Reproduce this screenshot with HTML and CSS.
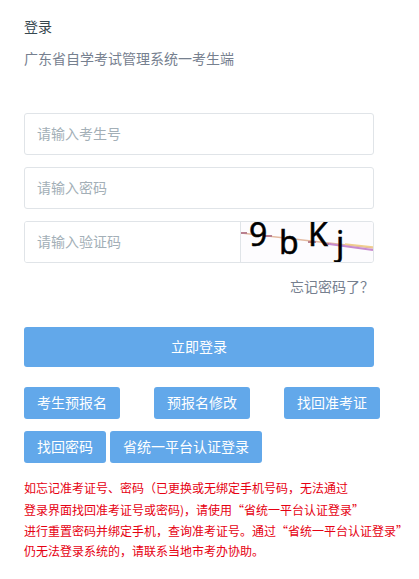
FILE: index.html
```html
<!DOCTYPE html>
<html lang="zh-CN">
<head>
  <meta charset="UTF-8">
  <meta name="viewport" content="width=device-width, initial-scale=1.0">
  <title>登录</title>
  <link rel="stylesheet" href="styles.css">
</head>
<body>

  <main class="login">
    <header class="login-header">
      <h1>登录</h1>
      <p>广东省自学考试管理系统一考生端</p>
    </header>

    <!-- Login form -->
    <form class="login-form">
      <input class="form-control" type="text" name="account" aria-label="考生号" placeholder="请输入考生号">
      <input class="form-control" type="password" name="password" aria-label="密码" placeholder="请输入密码">
      <div class="captcha-group">
        <input class="form-control" type="text" name="captcha" aria-label="验证码" placeholder="请输入验证码">
        <svg class="captcha" viewBox="0 0 132 40" role="img">
          <rect width="132" height="40" fill="#fdfcfe"/>
          <path d="M0 11 L132 26" stroke="#e3b9a0" stroke-width="1.4"/>
          <path d="M0 11 h6 M24 14 h7 M67 20 h8 M82 22 h8" stroke="#b9808f" stroke-width="2"/>
          <path d="M88 22 L132 28" stroke="#c78bd0" stroke-width="2"/>
          <path d="M104 22 L132 25" stroke="#f0cf8c" stroke-width="1.4"/>
          <g class="captcha-text">
            <text x="8" y="24">9</text>
            <text x="38" y="32">b</text>
            <text x="67" y="24">K</text>
            <text x="95" y="33">j</text>
          </g>
        </svg>
      </div>
      <a class="forgot" href="#">忘记密码了？</a>
      <button class="btn btn-login" type="submit">立即登录</button>
    </form>

    <!-- Other entries -->
    <div class="entries entries-wide">
      <button class="btn" type="button">考生预报名</button>
      <button class="btn" type="button">预报名修改</button>
      <button class="btn" type="button">找回准考证</button>
    </div>
    <div class="entries">
      <button class="btn" type="button">找回密码</button>
      <button class="btn" type="button">省统一平台认证登录</button>
    </div>

    <!-- Notice -->
    <div class="notice">
      <p>如忘记准考证号、密码（已更换或无绑定手机号码，无法通过</p>
      <p>登录界面找回准考证号或密码)，请使用“省统一平台认证登录”</p>
      <p class="tight">进行重置密码并绑定手机，查询准考证号。通过“省统一平台认证登录”<br>仍无法登录系统的，请联系当地市考办协助。</p>
    </div>
  </main>

</body>
</html>
```
FILE: styles.css
```css
* {
  box-sizing: border-box;
  margin: 0;
  padding: 0;
}

body {
  font-family: "Noto Sans CJK SC", sans-serif;
  font-size: 14px;
  line-height: 20px;
  background-color: #fff;
  color: #76808f;
}

input, button {
  font: inherit;
}

.login {
  padding: 16px 0 16px 24px;
}

.login-header h1 {
  margin-bottom: 12px;
  font-size: 14px;
  font-weight: normal;
  color: #37474f;
}

.login-form {
  display: flex;
  flex-direction: column;
  gap: 12px;
  margin: 45px 45px 20px 0;
}

.form-control {
  width: 100%;
  height: 42px;
  padding: 0 12px 2px;
  border: 1px solid #e0e4e8;
  border-radius: 3px;
  background-color: #fff;
  color: #37474f;
  outline: none;
}

.form-control::placeholder {
  color: #a3afb7;
}

/* Code box with the picture on its right */
.captcha-group {
  display: flex;
  height: 42px;
  border: 1px solid #e0e4e8;
  border-radius: 3px;
  overflow: hidden;
}

.captcha-group .form-control {
  flex: 1;
  min-width: 0;
  height: 40px;
  border-width: 0 1px 0 0;
  border-radius: 0;
}

.captcha {
  width: 132px;
  height: 40px;
}

.captcha-text {
  font-family: "Noto Sans", sans-serif;
  font-size: 32px;
  fill: #000;
  stroke: #000;
  stroke-width: 0.5;
}

.forgot {
  align-self: flex-end;
  margin: 1px 0 19px;
  color: #76808f;
  text-decoration: none;
}

.btn {
  height: 32px;
  padding: 0 13px 2px;
  border: none;
  border-radius: 3px;
  background-color: #62a8ea;
  color: #fff;
  white-space: nowrap;
  cursor: pointer;
}

.btn:hover {
  background-color: #4e97d9;
}

.btn-login {
  height: 40px;
}

.entries {
  display: flex;
  gap: 4px;
  margin-bottom: 12px;
}

.entries-wide {
  gap: 34px;
}

.notice {
  padding-top: 2px;
  font-size: 12px;
  line-height: 22px;
  color: #e60012;
  white-space: nowrap;
}

.notice .tight {
  line-height: 20px;
}
```
